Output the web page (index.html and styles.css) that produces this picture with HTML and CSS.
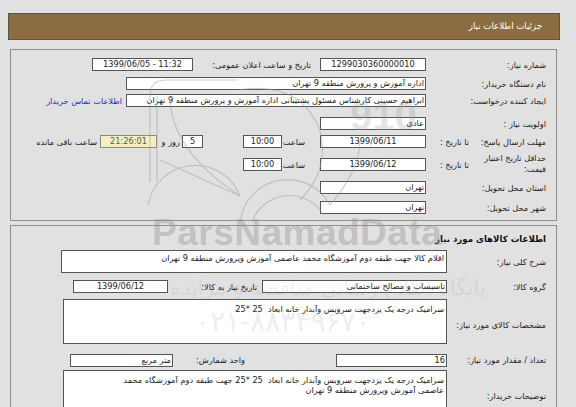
FILE: index.html
```html
<!DOCTYPE html>
<html lang="fa" dir="rtl">
<head>
<meta charset="utf-8">
<title>جزئیات اطلاعات نیاز</title>
<link rel="stylesheet" href="styles.css">
</head>
<body>
<div class="page">
  <div class="header">جزئیات اطلاعات نیاز</div>

  <div class="panel p1">
    <div class="row r1">
      <div class="lbl">شماره نیاز:</div>
      <div class="inp w106 c">1299030360000010</div>
      <div class="lbl2 pub">تاریخ و ساعت اعلان عمومی:</div>
      <div class="inp w101 c ltr">1399/06/05 - 11:32</div>
    </div>
    <div class="row r2">
      <div class="lbl">نام دستگاه خریدار:</div>
      <div class="inp w300">اداره آموزش و پرورش منطقه 9 تهران</div>
    </div>
    <div class="row r3">
      <div class="lbl">ایجاد کننده درخواست:</div>
      <div class="inp w300">ابراهیم حسینی کارشناس مسئول پشتیبانی اداره آموزش و پرورش منطقه 9 تهران</div>
      <a class="link" href="#">اطلاعات تماس خریدار</a>
    </div>
    <div class="row r4">
      <div class="lbl">اولویت نیاز :</div>
      <div class="inp w106">عادی</div>
    </div>
    <div class="row r5">
      <div class="lbl split"><span>مهلت ارسال پاسخ:</span><span>تا تاریخ :</span></div>
      <div class="inp w106 c">1399/06/11</div>
      <div class="hour">ساعت</div>
      <div class="inp w39 c">10:00</div>
      <div class="inp w21 c days">5</div>
      <div class="dayw">روز و</div>
      <div class="inp w57 c remain">21:26:01</div>
      <div class="rem">ساعت باقی مانده</div>
    </div>
    <div class="row r6">
      <div class="lbl split"><span class="two">حداقل تاریخ اعتبار<br>قیمت:</span><span>تا تاریخ :</span></div>
      <div class="inp w106 c">1399/06/12</div>
      <div class="hour">ساعت</div>
      <div class="inp w39 c">10:00</div>
    </div>
    <div class="row r7">
      <div class="lbl">استان محل تحویل:</div>
      <div class="inp w106">تهران</div>
    </div>
    <div class="row r8">
      <div class="lbl">شهر محل تحویل:</div>
      <div class="inp w106">تهران</div>
    </div>
  </div>

  <div class="panel p2">
    <div class="row t">
      <div class="title">اطلاعات کالاهای مورد نیاز</div>
    </div>
    <div class="row q1">
      <div class="lbl l2">شرح کلی نیاز:</div>
      <div class="box b1">اقلام کالا جهت طبقه دوم آموزشگاه محمد عاصمی آموزش وپرورش منطقه 9 تهران</div>
    </div>
    <div class="row q2">
      <div class="lbl l2">گروه کالا:</div>
      <div class="inp w185">تاسیسات و مصالح ساختمانی</div>
      <div class="lbl2 need">تاریخ نیاز به کالا:</div>
      <div class="inp w95 c">1399/06/12</div>
    </div>
    <div class="row q3">
      <div class="lbl l2 low">مشخصات کالای مورد نیاز:</div>
      <div class="box b3">سرامیک درجه یک یزدجهت سرویس وآبدار خانه ابعاد&nbsp; 25 *25</div>
    </div>
    <div class="row q4">
      <div class="lbl l2">تعداد / مقدار مورد نیاز:</div>
      <div class="inp w111">16</div>
      <div class="lbl2 unit">واحد شمارش:</div>
      <div class="inp w103">متر مربع</div>
    </div>
    <div class="row q5">
      <div class="lbl l2">توضیحات خریدار:</div>
      <div class="box b5">سرامیک درجه یک یزدجهت سرویس وآبدار خانه ابعاد&nbsp; 25 *25 جهت طبقه دوم آموزشگاه محمد<br>عاصمی آموزش وپرورش منطقه 9 تهران</div>
    </div>
  </div>
</div>

<div class="watermark" aria-hidden="true">
  <svg class="wm-logo" width="576" height="407" viewBox="0 0 576 407">
    <g fill="none" stroke="#9a9a9a" stroke-width="1.2" opacity="0.45">
      <line x1="150" y1="96" x2="150" y2="182"/>
      <line x1="157" y1="96" x2="157" y2="182"/>
      <path d="M150 96 Q150 80 166 80 L238 80"/>
      <path d="M170 96 Q170 150 240 196"/>
      <path d="M160 160 L240 196"/>
      <path d="M148 205 A48 48 0 0 1 240 196"/>
      <path d="M240 222 A48 48 0 0 1 330 205"/>
      <path d="M252 222 A40 40 0 0 1 322 212"/>
      <path d="M238 90 Q300 80 320 130 Q330 170 300 200"/>
      <path d="M330 205 Q360 170 360 140"/>
    </g>
    <text x="350" y="130" class="wm-num">910</text>
  </svg>
  <div class="wm-brand">ParsNamadData</div>
  <div class="wm-fa">پایگاه اطلاع رسانی مناقصه و مزایده</div>
  <div class="wm-tel">۰۲۱-۸۸۳۴۹۶۷۰</div>
</div>
</body>
</html>
```

FILE: styles.css
```css
html, body {
  margin: 0;
  padding: 0;
}
body {
  background: #e1e1e1;
  font-family: "DejaVu Sans", sans-serif;
  font-size: 8.2px;
  color: #222;
  width: 576px;
  height: 407px;
  overflow: hidden;
  position: relative;
}
.page {
  padding-top: 13px;
  direction: ltr;
}
.header {
  direction: rtl;
  margin-left: 8px;
  width: 550px;
  height: 25px;
  background: #8b6d41;
  border: 1px solid #5e5240;
  color: #fff;
  font-size: 8.6px;
  line-height: 25px;
  text-indent: 17px;
}
.panel {
  direction: rtl;
  margin-left: 10px;
  border: 1px solid #8f8f8f;
}
.p1 {
  margin-top: 9px;
  padding: 6px 10px 4px 0;
  width: 535px;
}
.p2 {
  margin-top: 4px;
  padding: 4px 10px 0 0;
  width: 535px;
  height: 200px;
}
.row {
  display: flex;
  align-items: center;
  height: 17px;
  white-space: nowrap;
}
.r2 { margin-top: 2px; }
.r3 { margin-top: 0; }
.r4 { margin-top: 6px; }
.r5 { margin-top: 1px; }
.r6 { margin-top: 6px; }
.r7 { margin-top: 6px; }
.r8 { margin-top: 3px; }

.lbl {
  width: 120px;
  flex: none;
  text-align: right;
  color: #222;
}
.lbl.split {
  display: flex;
  justify-content: space-between;
  align-items: center;
  box-sizing: border-box;
  padding-left: 14px;
}
.two {
  line-height: 11px;
  display: block;
  margin-top: -1px;
}
.inp {
  flex: none;
  height: 11px;
  line-height: 11px;
  border: 1px solid #555;
  background: #fff;
  padding: 0 1px;
  overflow: hidden;
  color: #222;
  text-align: right;
}
.inp.c { text-align: center; }
.ltr { direction: ltr; }
.w106 { width: 102px; }
.w101 { width: 97px; }
.w300 { width: 296px; }
.w39 { width: 35px; }
.w21 { width: 17px; }
.w57 { width: 53px; }
.w185 { width: 181px; }
.w95 { width: 91px; }
.w111 { width: 107px; }
.w103 { width: 99px; }

.lbl2 {
  flex: none;
  text-align: right;
  box-sizing: border-box;
}
.pub {
  width: 118px;
  margin-right: 9px;
  padding-left: 4px;
}
.link {
  margin-right: 4px;
  color: #2b2bbf;
  text-decoration: none;
}
.hour {
  flex: none;
  width: 38px;
  box-sizing: border-box;
  padding-right: 15px;
  text-align: right;
}
.days { margin-right: 40px; }
.dayw {
  flex: none;
  width: 25px;
  box-sizing: border-box;
  padding-right: 2px;
  text-align: right;
}
.remain {
  background: #f3efc0;
  border-color: #8c8c7a;
  color: #5d5d40;
}
.rem {
  margin-right: 3px;
}

.t { height: 17px; }
.title {
  font-weight: bold;
  font-size: 8.6px;
  color: #111;
}
.l2 { width: 99px; }
.low { padding-top: 7px; }
.q1 { margin-top: 3px; height: 23px; }
.q2 { margin-top: 7px; height: 13px; }
.q3 { margin-top: 6px; height: 45px; }
.q4 { margin-top: 10px; height: 12px; }
.q5 { margin-top: 4px; height: 52px; }
.box {
  flex: none;
  border: 1px solid #555;
  background: #fff;
  box-sizing: border-box;
  padding: 1px 2px 0 2px;
  line-height: 10px;
  text-align: right;
  white-space: normal;
  overflow: hidden;
}
.b1 { height: 23px; width: 386px; padding-top: 2px; }
.b3 { height: 45px; width: 384px; padding-top: 4px; }
.b5 { height: 52px; width: 384px; padding-top: 4px; white-space: nowrap; }
.need {
  width: 89px;
  margin-right: 5px;
  margin-left: 0;
}
.unit {
  width: 72px;
  margin-right: 91px;
  margin-left: 0;
}

.watermark {
  position: absolute;
  left: 0;
  top: 0;
  width: 576px;
  height: 407px;
  pointer-events: none;
  direction: ltr;
}
.wm-logo {
  position: absolute;
  left: 0;
  top: 0;
}
.wm-num {
  font-family: "Liberation Sans", sans-serif;
  font-weight: bold;
  font-size: 40px;
  fill: #9a9a9a;
  opacity: 0.25;
}
.wm-brand {
  position: absolute;
  left: 152px;
  top: 212px;
  font-family: "Liberation Sans", sans-serif;
  font-weight: bold;
  font-size: 37px;
  letter-spacing: 0.5px;
  color: rgba(150, 150, 150, 0.42);
}
.wm-fa {
  position: absolute;
  left: 170px;
  top: 276px;
  direction: rtl;
  font-size: 21px;
  color: rgba(150, 150, 150, 0.16);
}
.wm-tel {
  position: absolute;
  left: 195px;
  top: 305px;
  font-size: 28px;
  color: rgba(150, 150, 150, 0.18);
}
```
